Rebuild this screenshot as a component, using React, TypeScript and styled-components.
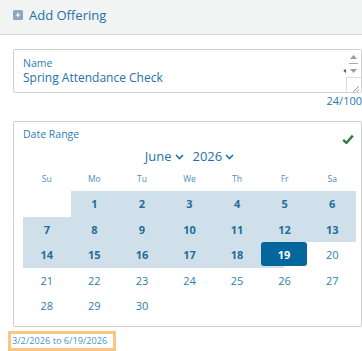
import { FC } from "react";
import styled, { createGlobalStyle } from "styled-components";

const GlobalStyle = createGlobalStyle`
  html, body {
    margin: 0;
    padding: 0;
    background: #ffffff;
    font-family: "Open Sans", "Liberation Sans", sans-serif;
  }
`;

const BLUE = "#1f72a8";
const GREEN = "#2d7a4b";

/* 1..30, first row starts on Monday */
const WEEKDAYS = ["Su", "Mo", "Tu", "We", "Th", "Fr", "Sa"];
const FIRST_OFFSET = 1;
const RANGE_END = 19;

const CheckIcon: FC = () => (
  <svg width="12" height="11" viewBox="0 0 12 11">
    <path d="M1.2 5.8 L4.4 9 L10.8 1.6" fill="none" stroke={GREEN} strokeWidth="2.4" strokeLinejoin="round" />
  </svg>
);

const Chevron: FC = () => (
  <svg width="9" height="6" viewBox="0 0 9 6">
    <polyline points="1,1 4.5,4.6 8,1" fill="none" stroke={BLUE} strokeWidth="1.5" />
  </svg>
);

const PlusIcon: FC = () => (
  <svg width="10" height="10" viewBox="0 0 10 10">
    <rect x="0" y="0" width="10" height="10" rx="1.5" fill="#8aa7bf" />
    <path d="M5 2.8 V7.2 M2.8 5 H7.2" stroke="#ffffff" strokeWidth="1.2" />
  </svg>
);

export default function App() {
  const cells: (number | null)[] = [];
  for (let i = 0; i < FIRST_OFFSET; i++) cells.push(null);
  for (let d = 1; d <= 30; d++) cells.push(d);

  return (
    <>
      <GlobalStyle />
      <Header>
        <PlusIcon />
        <HeaderTitle>Add Offering</HeaderTitle>
      </Header>
      <Body>
        <NameBox>
          <FieldLabel>Name</FieldLabel>
          <NameValue>Spring Attendance Check</NameValue>
          <NameCheck>
            <CheckIcon />
          </NameCheck>
          <ScrollBar>
            <svg width="15" height="27" viewBox="0 0 15 27">
              <polygon points="4,9 11,9 7.5,5" fill="#9c9c9c" />
              <line x1="3" y1="13.5" x2="12" y2="13.5" stroke="#a9a9a9" strokeWidth="1" />
              <polygon points="4,19 11,19 7.5,23" fill="#9c9c9c" />
            </svg>
            <Resizer>
              <svg width="14" height="14" viewBox="0 0 14 14">
                <line x1="5" y1="12" x2="12" y2="5" stroke="#8d8d8d" strokeWidth="0.9" />
                <line x1="8.5" y1="12" x2="12" y2="8.5" stroke="#8d8d8d" strokeWidth="0.9" />
              </svg>
            </Resizer>
          </ScrollBar>
        </NameBox>
        <Counter>24/100</Counter>

        <DateBox>
          <FieldLabel>Date Range</FieldLabel>
          <DateCheck>
            <CheckIcon />
          </DateCheck>
          <MonthRow>
            <MonthPick>June<Chevron /></MonthPick>
            <MonthPick>2026<Chevron /></MonthPick>
          </MonthRow>
          <Grid>
            {WEEKDAYS.map((w) => (
              <WeekDay key={w}>{w}</WeekDay>
            ))}
            {cells.map((d, i) =>
              d === null ? (
                <DayCell key={i} />
              ) : d === RANGE_END ? (
                <DayCell key={i} $half>
                  <Selected>{d}</Selected>
                </DayCell>
              ) : (
                <DayCell key={i} $inRange={d < RANGE_END}>
                  {d}
                </DayCell>
              )
            )}
          </Grid>
        </DateBox>
        <RangeText>3/2/2026 to 6/19/2026</RangeText>
      </Body>
    </>
  );
}

const Header = styled.div`
  display: flex;
  align-items: center;
  gap: 6px;
  height: 30px;
  padding: 0 0 4px 13px;
  background: #f2f3f3;
  border-bottom: 1px solid #d3d8dc;
`;

const HeaderTitle = styled.span`
  font-size: 13px;
  color: ${BLUE};
`;

const Body = styled.div`
  padding: 14px 0 0 13px;
`;

const NameBox = styled.div`
  position: relative;
  height: 42px;
  border: 1px solid #cfd3d6;
  border-radius: 2px;
  padding: 0 0 0 9px;
  display: flex;
  flex-direction: column;
  overflow: hidden;
`;

const FieldLabel = styled.div`
  font-size: 10.5px;
  line-height: 14px;
  margin-top: 6px;
  color: #2e7eb4;
`;

const NameValue = styled.div`
  font-size: 12px;
  line-height: 15px;
  color: ${BLUE};
`;

const NameCheck = styled.div`
  position: absolute;
  right: 6px;
  top: 8px;
`;

const ScrollBar = styled.div`
  position: absolute;
  top: 0;
  right: 0;
  bottom: 0;
  width: 15px;
  background: #ffffff;
  display: flex;
  flex-direction: column;
  justify-content: space-between;
`;

const Resizer = styled.div`
  width: 14px;
  height: 14px;
  border-left: 1px solid #dcdcdc;
  border-top: 1px solid #dcdcdc;
`;

const Counter = styled.div`
  text-align: right;
  font-size: 11px;
  line-height: 14px;
  margin-top: 1px;
  color: #2a7ab0;
`;

const DateBox = styled.div`
  position: relative;
  margin-top: 13px;
  height: 197px;
  border: 1px solid #cfd3d6;
  border-radius: 2px;
  padding: 0 5px 7px 9px;
  display: flex;
  flex-direction: column;
  & > ${FieldLabel} {
    margin-top: 5px;
  }
`;

const DateCheck = styled.div`
  position: absolute;
  right: 7px;
  top: 6px;
`;

const MonthRow = styled.div`
  display: flex;
  justify-content: center;
  gap: 9px;
  margin-top: 7px;
  height: 17px;
`;

const MonthPick = styled.span`
  display: inline-flex;
  align-items: center;
  gap: 3px;
  font-size: 13px;
  line-height: 17px;
  color: ${BLUE};
`;

const Grid = styled.div`
  display: grid;
  grid-template-columns: repeat(7, 1fr);
  grid-template-rows: 26px repeat(5, 25.5px);
`;

const WeekDay = styled.div`
  display: flex;
  align-items: center;
  justify-content: center;
  font-size: 8.5px;
  color: #4c8dbd;
`;

const DayCell = styled.div<{ $inRange?: boolean; $half?: boolean }>`
  display: flex;
  align-items: center;
  justify-content: center;
  font-size: 11px;
  font-weight: ${(p) => (p.$inRange ? 700 : 400)};
  color: ${(p) => (p.$inRange ? "#256c99" : "#2c7db3")};
  background: ${(p) =>
    p.$inRange
      ? "#cfe0eb"
      : p.$half
      ? "linear-gradient(to right, #cfe0eb 50%, transparent 50%)"
      : "transparent"};
`;

const Selected = styled.div`
  display: flex;
  align-items: center;
  justify-content: center;
  width: calc(100% - 1px);
  height: 24px;
  align-self: flex-start;
  margin-right: 1px;
  border-radius: 3px;
  background: #03679b;
  color: #ffffff;
  font-weight: 700;
`;

const RangeText = styled.span`
  display: inline-block;
  margin: -1px 0 0 -5px;
  padding: 0 6px 0 1px;
  border: 3px solid #f9c685;
  font-size: 9.2px;
  line-height: 14px;
  color: #4d93c9;
`;
